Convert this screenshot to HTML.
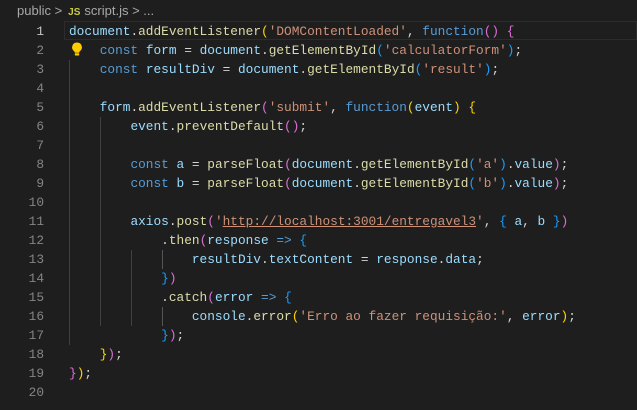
<!DOCTYPE html>
<html><head><meta charset="utf-8"><style>
body{margin:0;width:637px;height:410px;background:#1e1e1e;overflow:hidden;font-family:"Liberation Mono",monospace;}
.bc{position:absolute;left:17px;top:3px;font:13px "Liberation Sans",sans-serif;color:#a9a9a9;}
.bc .js{color:#cbcb41;font-weight:bold;font-size:10px;margin:0 4px 0 6px}
.ln{position:absolute;left:0;width:44px;text-align:right;color:#858585;font-size:12.8px;line-height:19px}
.c{position:absolute;left:69px;font-size:12.8px;line-height:19px;white-space:pre;color:#d4d4d4}
.cur{position:absolute;left:64px;right:0;top:21px;height:19px;border:1px solid #2c2c2c;box-sizing:border-box}
.g{position:absolute;width:1px;background:#404040}
.v{color:#9cdcfe}.f{color:#dcdcaa}.s{color:#ce9178}.k{color:#569cd6}
.y{color:#ffd700}.p{color:#da70d6}.b{color:#179fff}
.u{text-decoration:underline}
</style></head><body>
<div class="bc">public &gt;<span class="js">JS</span>script.js &gt; ...</div>
<div class="cur"></div>
<div class="g" style="left:69px;top:60px;height:285px"></div>
<div class="g" style="left:100px;top:117px;height:209px"></div>
<div class="g" style="left:131px;top:250px;height:76px"></div>
<div class="g" style="left:162px;top:250px;height:19px;background:#555"></div>
<div class="g" style="left:162px;top:307px;height:19px;background:#555"></div>
<svg style="position:absolute;left:71px;top:42px" width="12" height="14" viewBox="0 0 12 14"><path d="M6 0.5a4.8 4.8 0 0 0-3 8.6c.5.5.8 1 .8 1.7h4.4c0-.7.3-1.2.8-1.7A4.8 4.8 0 0 0 6 .5z" fill="#ffcc00"/><rect x="3.8" y="11.3" width="4.4" height="2.2" rx=".6" fill="#ffcc00"/></svg>
<div class="c" style="top:22px"><span class="v">document</span>.<span class="f">addEventListener</span><span class="y">(</span><span class="s">'DOMContentLoaded'</span>, <span class="k">function</span><span class="p">()</span> <span class="p">{</span>
    <span class="k">const</span> <span class="v">form</span> = <span class="v">document</span>.<span class="f">getElementById</span><span class="b">(</span><span class="s">'calculatorForm'</span><span class="b">)</span>;
    <span class="k">const</span> <span class="v">resultDiv</span> = <span class="v">document</span>.<span class="f">getElementById</span><span class="b">(</span><span class="s">'result'</span><span class="b">)</span>;

    <span class="v">form</span>.<span class="f">addEventListener</span><span class="p">(</span><span class="s">'submit'</span>, <span class="k">function</span><span class="y">(</span><span class="v">event</span><span class="y">)</span> <span class="y">{</span>
        <span class="v">event</span>.<span class="f">preventDefault</span><span class="p">()</span>;

        <span class="k">const</span> <span class="v">a</span> = <span class="f">parseFloat</span><span class="p">(</span><span class="v">document</span>.<span class="f">getElementById</span><span class="b">(</span><span class="s">'a'</span><span class="b">)</span>.<span class="v">value</span><span class="p">)</span>;
        <span class="k">const</span> <span class="v">b</span> = <span class="f">parseFloat</span><span class="p">(</span><span class="v">document</span>.<span class="f">getElementById</span><span class="b">(</span><span class="s">'b'</span><span class="b">)</span>.<span class="v">value</span><span class="p">)</span>;

        <span class="v">axios</span>.<span class="f">post</span><span class="p">(</span><span class="s">'<span class="u">http://localhost:3001/entregavel3</span>'</span>, <span class="b">{</span> <span class="v">a</span>, <span class="v">b</span> <span class="b">}</span><span class="p">)</span>
            .<span class="f">then</span><span class="p">(</span><span class="v">response</span> <span class="k">=&gt;</span> <span class="b">{</span>
                <span class="v">resultDiv</span>.<span class="v">textContent</span> = <span class="v">response</span>.<span class="v">data</span>;
            <span class="b">}</span><span class="p">)</span>
            .<span class="f">catch</span><span class="p">(</span><span class="v">error</span> <span class="k">=&gt;</span> <span class="b">{</span>
                <span class="v">console</span>.<span class="f">error</span><span class="y">(</span><span class="s">'Erro ao fazer requisição:'</span>, <span class="v">error</span><span class="y">)</span>;
            <span class="b">}</span><span class="p">)</span>;
    <span class="y">}</span><span class="p">)</span>;
<span class="p">}</span><span class="y">)</span>;
</div>
<div class="ln" style="top:22px">1<br>2<br>3<br>4<br>5<br>6<br>7<br>8<br>9<br>10<br>11<br>12<br>13<br>14<br>15<br>16<br>17<br>18<br>19<br>20</div>
<div class="ln" style="top:22px;color:#c6c6c6;background:#1e1e1e;height:19px">1</div>
</body></html>
